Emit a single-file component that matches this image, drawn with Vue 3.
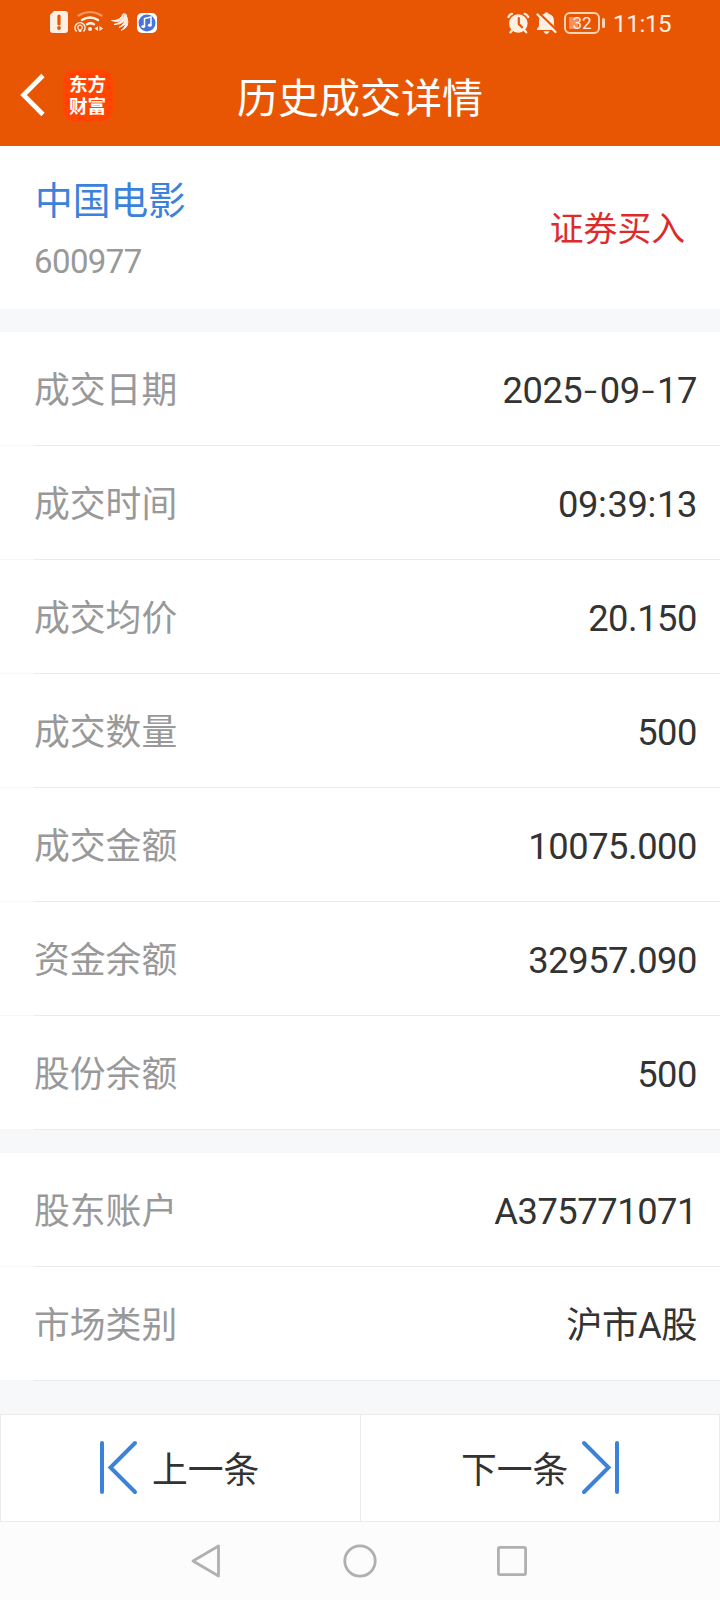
<script setup>
const trade = [
  ['成交日期', '2025-09-17'],
  ['成交时间', '09:39:13'],
  ['成交均价', '20.150'],
  ['成交数量', '500'],
  ['成交金额', '10075.000'],
  ['资金余额', '32957.090'],
  ['股份余额', '500'],
]
const account = [
  ['股东账户', 'A375771071'],
  ['市场类别', '沪市A股'],
]
const groups = [trade, account]
const parts = (v) => v.split(/([-:])/)
</script>

<template>
  <div class="screen">
    <header class="top">
      <div class="status">
        <svg class="left-icons" width="120" height="30" viewBox="45 8 120 30">
          <path d="M54 11h11q3 0 3 3v16q0 3-3 3H53q-3 0-3-3V15z" fill="#fff0e6" />
          <path d="M59 16v8" stroke="#e95603" stroke-width="3.2" stroke-linecap="round" />
          <circle cx="59" cy="28" r="1.9" fill="#e95603" />
          <g fill="none" stroke="#fff0e6" stroke-linecap="round">
            <path d="M78.500 15.500q11.500-7 23 0" stroke-width="2.200" opacity=".45" />
            <path d="M82 20q8-5 16 0" stroke-width="2.400" />
            <path d="M87 24.200q3.500-2 7 0" stroke-width="2.400" />
            <path d="M76.200 31a5 5 0 1 1 7.600 0" stroke-width="1.500" />
            <path d="M78.400 29a2.200 2.200 0 1 1 3.200 0" stroke-width="1.200" />
          </g>
          <circle cx="80" cy="30.500" r="1.600" fill="#fff0e6" />
          <circle cx="90" cy="29" r="2" fill="#fff0e6" />
          <path d="M98 26v5l-3.500-2.500zM99.500 26v5l3.500-2.500z" fill="#fff0e6" />
          <path d="M111.500 20.500q8 1 12-7-1 11-12 7zM114 24.500q9-2 11-11 2 11-11 11zM119 27.500q7-4 7-13 4.500 9-7 13zM121 30.500q6-4 5.500-13 4.500 9-5.500 13z" fill="#fff0e6" stroke="#fff0e6" stroke-width="1" />
          <rect x="137" y="13" width="20" height="20" rx="5" fill="#fff" />
          <circle cx="147" cy="23" r="8.500" fill="#4a73dc" />
          <path d="M144.500 26.500v-8l6.500-1.500v8" fill="none" stroke="#fff" stroke-width="1.500" />
          <ellipse cx="143.300" cy="26.500" rx="1.900" ry="1.600" fill="#fff" />
          <ellipse cx="149.800" cy="25.200" rx="1.900" ry="1.600" fill="#fff" />
        </svg>
        <div class="right-status">
          <svg width="52" height="24" viewBox="506 11 52 24">
            <circle cx="518.300" cy="23.500" r="9.300" fill="#fff0e6" />
            <path d="M508.500 17q1-2.500 3.500-3.200M528.200 17q-1-2.500-3.500-3.200M512.500 30l-2 2.300M524.200 30l2 2.300" fill="none" stroke="#fff0e6" stroke-width="2.200" stroke-linecap="round" />
            <path d="M518.800 18v6l3.200 3.300" fill="none" stroke="#e95603" stroke-width="2.200" stroke-linecap="round" />
            <path d="M537 30v-1.200q2-1.300 2-3.800v-4q0-6 5.500-7.200 0-1.600 2-1.600t2 1.600Q554 15 554 21v4q0 2.500 2 3.800V30z" fill="#fff0e6" />
            <path d="M543.500 31.300h6q-1 2.600-3 2.600t-3-2.600z" fill="#fff0e6" />
            <path d="M538.500 12.500L558 31.500" stroke="#e95603" stroke-width="2.400" />
            <path d="M537.500 14.500L555.500 32" stroke="#fff0e6" stroke-width="2.200" stroke-linecap="round" />
          </svg>
          <div class="battery"><span>32</span></div>
          <i class="tip"></i>
          <span class="clock">11:15</span>
        </div>
      </div>
      <div class="titlebar">
        <svg class="back" width="28" height="44" viewBox="0 0 28 44">
          <path d="M24 2.500L4.500 22 24 41.500" fill="none" stroke="#fff" stroke-width="4.600" />
        </svg>
        <div class="logo">东方财富</div>
        <h1>历史成交详情</h1>
      </div>
    </header>

    <section class="stock">
      <div>
        <div class="name">中国电影</div>
        <div class="code">600977</div>
      </div>
      <div class="side">证券买入</div>
    </section>

    <section v-for="(g, i) in groups" :key="i" class="group">
      <div v-for="[label, value] in g" :key="label" class="row">
        <span class="label">{{ label }}</span>
        <span class="value"><span v-for="(p, j) in parts(value)" :key="j" :class="{ dash: p === '-', colon: p === ':' }">{{ p }}</span></span>
      </div>
    </section>

    <div class="pager">
      <div class="cell prev">
        <svg width="40" height="56" viewBox="0 0 40 56">
          <path d="M4 3v49M37 3L12.500 27.500 37 52" fill="none" stroke="#3b82da" stroke-width="4" stroke-linecap="round" />
        </svg>
        <span>上一条</span>
      </div>
      <div class="cell next">
        <span>下一条</span>
        <svg width="40" height="56" viewBox="0 0 40 56">
          <path d="M36 3v49M3 3l24.500 24.500L3 52" fill="none" stroke="#3b82da" stroke-width="4" stroke-linecap="round" />
        </svg>
      </div>
    </div>

    <nav class="nav">
      <svg width="720" height="78" viewBox="0 1522 720 78" fill="none" stroke="#b0b0b0" stroke-width="2.800" stroke-linejoin="round">
        <path d="M218.500 1546v30L193 1561z" />
        <circle cx="360" cy="1561" r="15.200" />
        <rect x="498.400" y="1547.400" width="27.200" height="27.200" rx="1.500" />
      </svg>
    </nav>
  </div>
</template>

<style>
body { margin: 0; background: #f6f8fa; }
</style>

<style scoped>
.screen { width: 720px; height: 1600px; overflow: hidden; display: flex; flex-direction: column; background: #f6f8fa; font-family: Roboto, "Noto Sans CJK SC", sans-serif; color: #333; }
.top { height: 146px; background: #e95603; color: #fff; }
.status { height: 46px; display: flex; justify-content: space-between; box-sizing: border-box; padding: 8px 0 0 45px; }
.right-status { display: flex; align-items: center; height: 30px; width: 214px; color: #fff0e6; }
.battery { box-sizing: border-box; width: 36px; height: 22px; margin-left: 6px; border: 2px solid #ffd3b5; border-radius: 6px; display: flex; align-items: center; justify-content: center; font-size: 17px; line-height: 18px; background: linear-gradient(90deg, transparent 3px, #f59158 3px 12px, transparent 12px) 0 3px / 100% 12px no-repeat; }
.tip { width: 3px; height: 10px; margin-left: 2px; border-radius: 2px; background: #ffd3b5; }
.clock { margin-left: 8px; font-size: 24px; letter-spacing: -0.300px; line-height: 30px; padding-top: 2px; }
.titlebar { height: 100px; display: grid; grid-template-columns: 63px 51px 492px 114px; align-items: center; }
.back { margin-left: 19px; margin-top: -2px; }
.logo { box-sizing: border-box; width: 50px; height: 51px; margin-top: -1px; border-radius: 11px; background: #ff4500; padding: 2px 6px 0; font: 700 18.600px/22px "Noto Sans CJK SC", sans-serif; word-break: break-all; }
h1 { margin: -2px 0 0; text-align: center; font-size: 41px; line-height: 60px; font-weight: 400; font-family: "Noto Sans CJK SC", sans-serif; }
.stock { height: 163px; box-sizing: border-box; background: #fff; padding: 29px 35px 0 35px; display: flex; justify-content: space-between; margin-bottom: 23px; }
.name { font-size: 37.700px; line-height: 52px; color: #3b82da; }
.code { margin-top: 10px; font-size: 33px; line-height: 50px; letter-spacing: -0.600px; margin-left: -1px; color: #999; }
.side { padding-top: 30px; font-size: 33.800px; line-height: 50px; color: #dd2b2b; }
.group { margin-bottom: 23px; }
.row { height: 114px; box-sizing: border-box; display: flex; align-items: center; justify-content: space-between; padding: 3px 23px 0 34px; background: linear-gradient(#ebebeb, #ebebeb) 34px 100% / 100% 1px no-repeat, linear-gradient(#f8f8f8, #f8f8f8) 0 100% / 34px 1px no-repeat, #fff; font-size: 36.300px; line-height: 54px; }
.label { color: #999; font-family: "Noto Sans CJK SC", sans-serif; font-size: 35.800px; margin-top: -8px; }
.value { letter-spacing: -0.450px; white-space: nowrap; }
.dash { font-family: Inter, sans-serif; font-weight: 300; letter-spacing: 1px; }
.colon { letter-spacing: 0.800px; }
.pager { margin-top: 10px; height: 108px; box-sizing: border-box; border: 1px solid #ebebeb; background: #fff; display: grid; grid-template-columns: 360px 358px; font: 35.800px/54px "Noto Sans CJK SC", sans-serif; }
.cell { display: flex; align-items: center; gap: 14px; }
.cell span { margin-top: -3px; }
.prev { padding-left: 97px; border-right: 1px solid #ebebeb; box-sizing: border-box; }
.next { padding-left: 100px; box-sizing: border-box; gap: 13px; }
.nav { height: 78px; background: #fcfcfc; }
.nav svg { display: block; }
</style>
